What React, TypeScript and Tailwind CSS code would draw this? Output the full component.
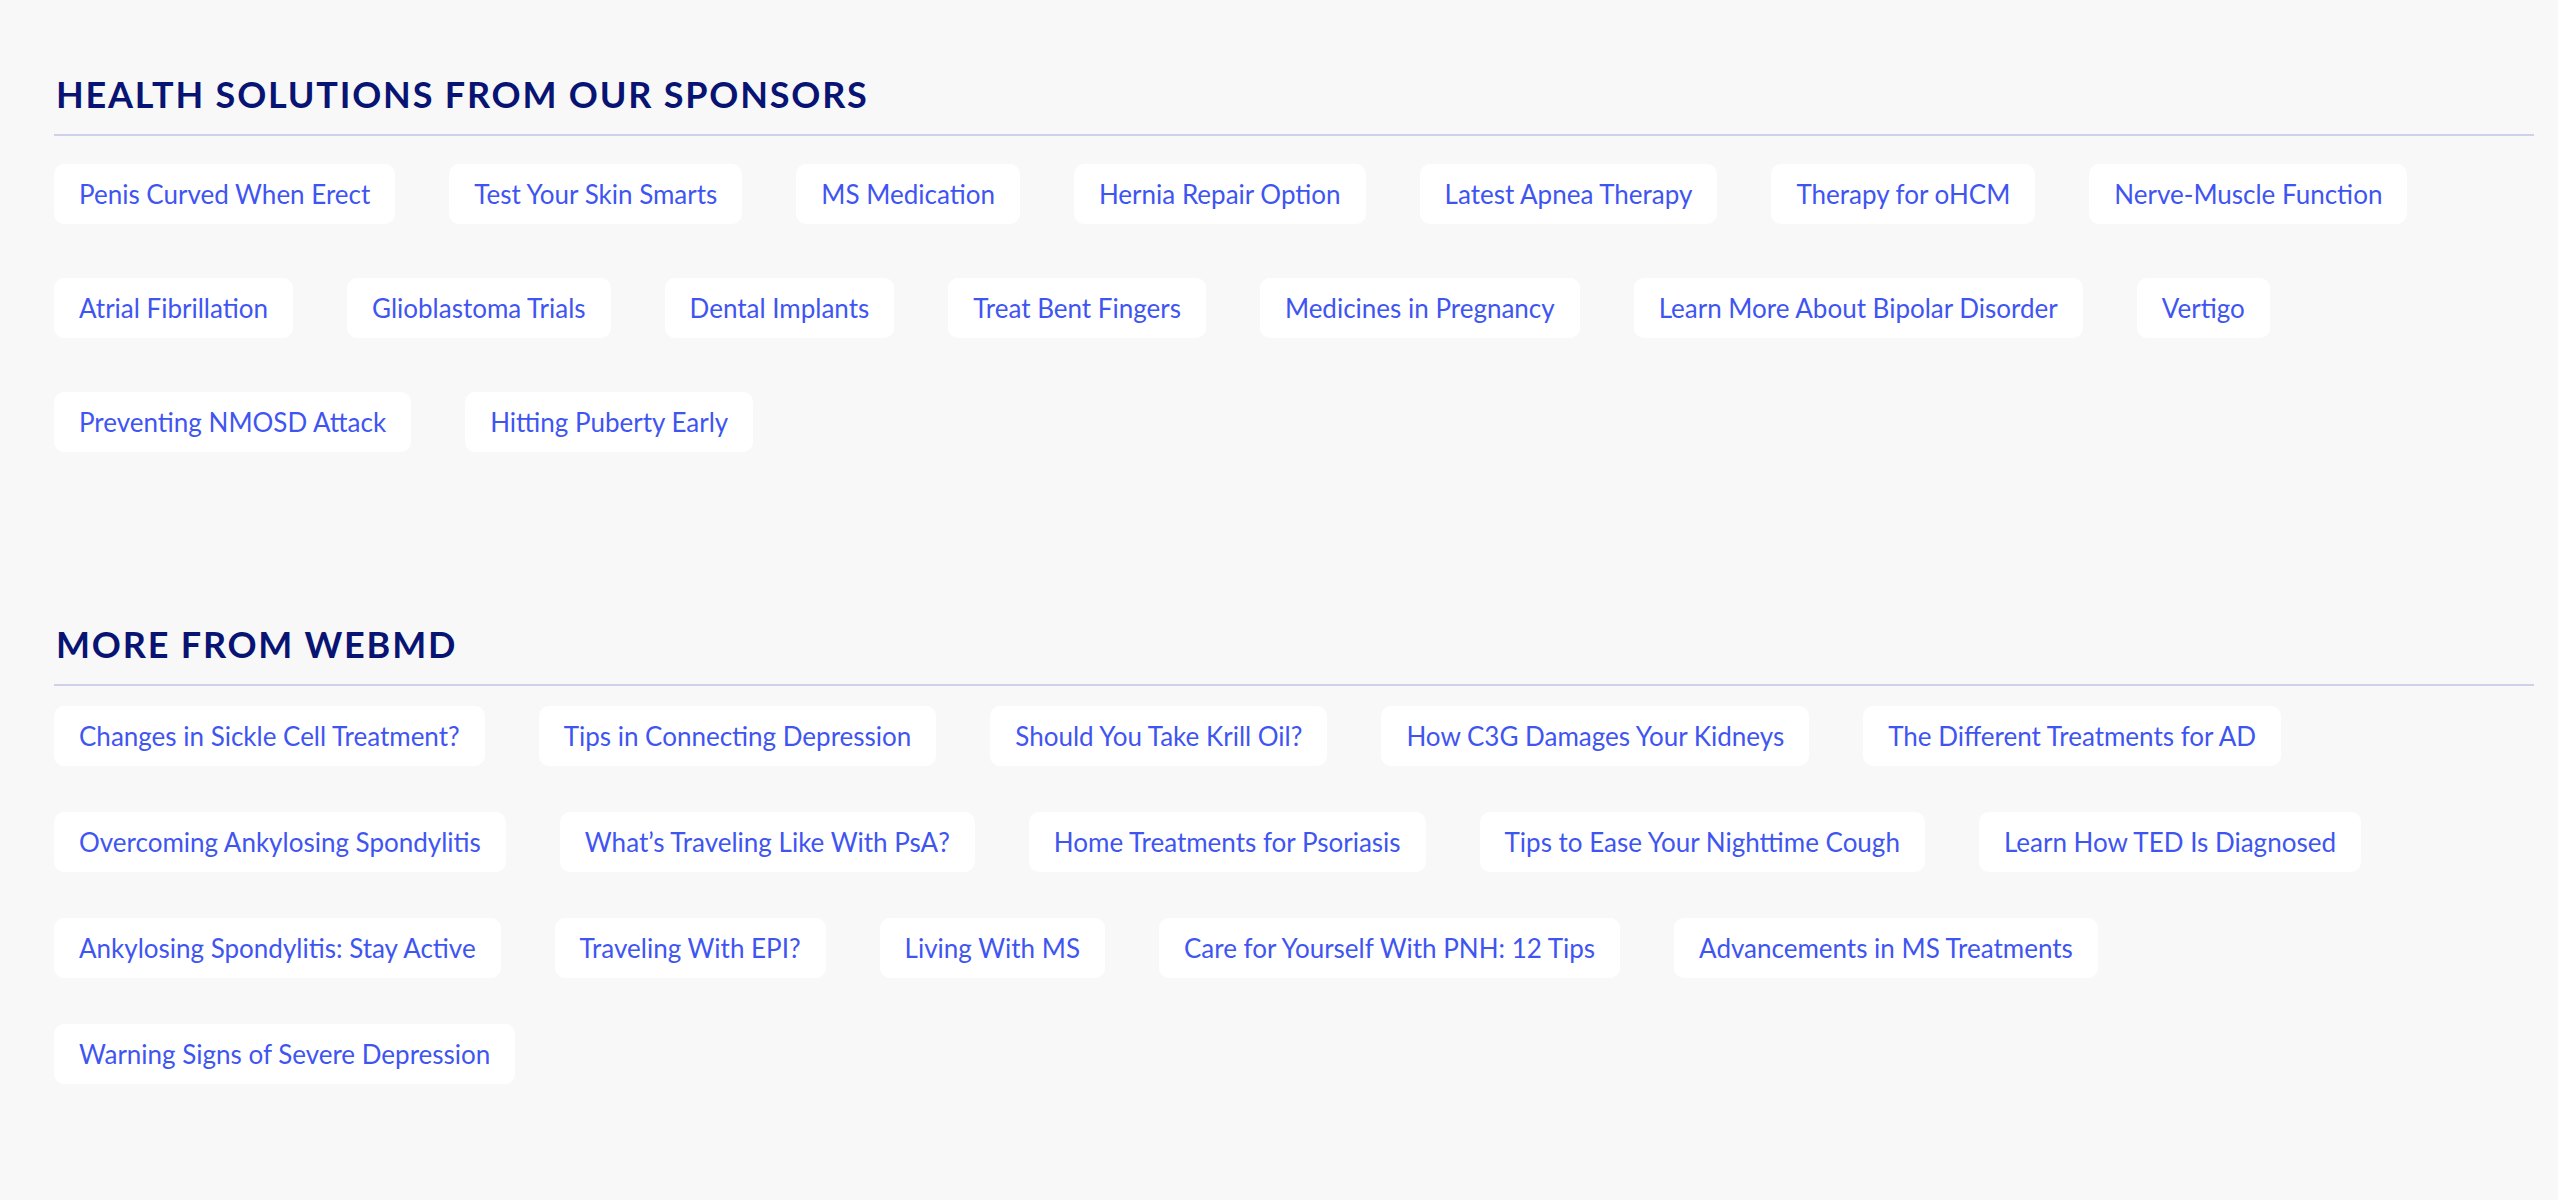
const sponsors = [
  "Penis Curved When Erect",
  "Test Your Skin Smarts",
  "MS Medication",
  "Hernia Repair Option",
  "Latest Apnea Therapy",
  "Therapy for oHCM",
  "Nerve-Muscle Function",
  "Atrial Fibrillation",
  "Glioblastoma Trials",
  "Dental Implants",
  "Treat Bent Fingers",
  "Medicines in Pregnancy",
  "Learn More About Bipolar Disorder",
  "Vertigo",
  "Preventing NMOSD Attack",
  "Hitting Puberty Early",
];

const more = [
  "Changes in Sickle Cell Treatment?",
  "Tips in Connecting Depression",
  "Should You Take Krill Oil?",
  "How C3G Damages Your Kidneys",
  "The Different Treatments for AD",
  "Overcoming Ankylosing Spondylitis",
  "What’s Traveling Like With PsA?",
  "Home Treatments for Psoriasis",
  "Tips to Ease Your Nighttime Cough",
  "Learn How TED Is Diagnosed",
  "Ankylosing Spondylitis: Stay Active",
  "Traveling With EPI?",
  "Living With MS",
  "Care for Yourself With PNH: 12 Tips",
  "Advancements in MS Treatments",
  "Warning Signs of Severe Depression",
];

function Pill({ label }: { label: string }) {
  return (
    <a
      href="#"
      className="flex h-[60px] items-center rounded-[10px] bg-white px-[25px] text-[26px] text-[#3f55f2] no-underline whitespace-nowrap"
    >
      {label}
    </a>
  );
}

export default function App() {
  return (
    <div
      className="min-h-screen bg-[#f8f8f8] pl-[54px] pr-[24px] pt-[76px] pb-[80px]"
      style={{ fontFamily: "Lato, 'Noto Sans', sans-serif" }}
    >
      <section>
        <h2 className="pl-[2px] text-[36px] font-bold leading-none tracking-[0.05em] text-[#081473] uppercase">
          Health Solutions From Our Sponsors
        </h2>
        <div className="mt-[22px] h-[2px] bg-[#cfd0e9]" />
        <div className="mt-[28px] flex flex-wrap gap-x-[54px] gap-y-[54px]">
          {sponsors.map((s) => (
            <Pill key={s} label={s} />
          ))}
        </div>
      </section>

      <section className="mt-[174px]">
        <h2 className="pl-[2px] text-[36px] font-bold leading-none tracking-[0.05em] text-[#081473] uppercase">
          More From WebMD
        </h2>
        <div className="mt-[22px] h-[2px] bg-[#cfd0e9]" />
        <div className="mt-[20px] flex flex-wrap gap-x-[54px] gap-y-[46px]">
          {more.map((s) => (
            <Pill key={s} label={s} />
          ))}
        </div>
      </section>
    </div>
  );
}
